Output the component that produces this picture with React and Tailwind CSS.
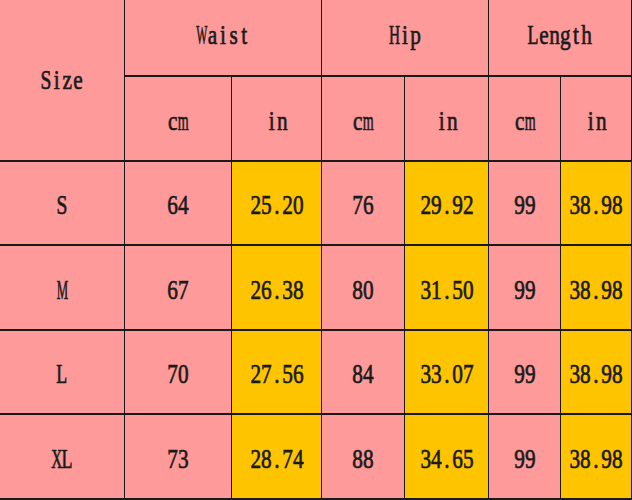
import React from "react";

const PINK = "bg-[#fe9a9a]";
const YEL = "bg-[#ffc400]";

const NARROW = {
  W: "scale-x-[0.55]",
  M: "scale-x-[0.6]",
  m: "scale-x-[0.66]",
  H: "scale-x-[0.72]",
  X: "scale-x-[0.72]",
  L: "scale-x-[0.84]",
  S: "scale-x-[0.92]",
};

function T({ children }) {
  return (
    <span className="inline-flex scale-x-[0.76] whitespace-nowrap text-[28px] leading-none [-webkit-text-stroke:0.7px_#1a1a1a]">
      {children.split("").map((c, i) => (
        <span key={i} className="inline-flex w-[14px] justify-center">
          <span className={`inline-block ${NARROW[c] || ""}`}>{c}</span>
        </span>
      ))}
    </span>
  );
}

const rows = [
  ["S", "64", "25.20", "76", "29.92", "99", "38.98"],
  ["M", "67", "26.38", "80", "31.50", "99", "38.98"],
  ["L", "70", "27.56", "84", "33.07", "99", "38.98"],
  ["XL", "73", "28.74", "88", "34.65", "99", "38.98"],
];

export default function App() {
  const cell = "flex items-center justify-center border-r border-b-2 border-[#1a1a1a]";
  return (
    <div
      className="w-[632px] h-[500px] overflow-hidden text-[#1a1a1a]"
      style={{ fontFamily: '"Liberation Serif", serif' }}
    >
      <div className="grid grid-cols-[125px_107px_90px_83px_84px_72px_71px] grid-rows-[77px_85px_84px_85px_84px_85px]">
        <div className={`${cell} ${PINK} row-span-2`}><T>Size</T></div>
        <div className={`${cell} ${PINK} col-span-2 pb-1.5`}><T>Waist</T></div>
        <div className={`${cell} ${PINK} col-span-2 pb-1.5`}><T>Hip</T></div>
        <div className={`${cell} ${PINK} col-span-2 pb-1.5`}><T>Length</T></div>
        <div className={`${cell} ${PINK} pt-1`}><T>cm</T></div>
        <div className={`${cell} ${PINK} pt-1`}><T>in</T></div>
        <div className={`${cell} ${PINK} pt-1`}><T>cm</T></div>
        <div className={`${cell} ${PINK} pt-1`}><T>in</T></div>
        <div className={`${cell} ${PINK} pt-1`}><T>cm</T></div>
        <div className={`${cell} ${PINK} pt-1`}><T>in</T></div>
        {rows.map((r) =>
          r.map((v, i) => (
            <div
              key={r[0] + i}
              className={`${cell} pt-1 ${i === 2 || i === 4 || i === 6 ? YEL : PINK}`}
            >
              <T>{v}</T>
            </div>
          ))
        )}
      </div>
    </div>
  );
}
